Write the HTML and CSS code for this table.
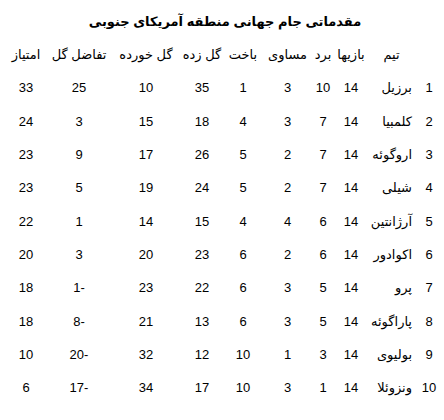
FILE: index.html
```html
<!DOCTYPE html>
<html lang="fa" dir="rtl">
<head>
<meta charset="utf-8">
<title>مقدماتی جام جهانی منطقه آمریکای جنوبی</title>
<link rel="stylesheet" href="styles.css">
</head>
<body>
<div class="page">
  <h1 class="title">مقدماتی جام جهانی منطقه آمریکای جنوبی</h1>
  <div class="table">
    <div class="row head">
      <span class="c rank"></span>
      <span class="c team-h">تیم</span>
      <span class="c">بازیها</span>
      <span class="c">برد</span>
      <span class="c">مساوی</span>
      <span class="c">باخت</span>
      <span class="c">گل زده</span>
      <span class="c">گل خورده</span>
      <span class="c">تفاضل گل</span>
      <span class="c">امتیاز</span>
    </div>
    <div class="row"><span class="c rank">1</span><span class="c team">برزیل</span><span class="c">14</span><span class="c">10</span><span class="c">3</span><span class="c">1</span><span class="c">35</span><span class="c">10</span><span class="c">25</span><span class="c">33</span></div>
    <div class="row"><span class="c rank">2</span><span class="c team">کلمبیا</span><span class="c">14</span><span class="c">7</span><span class="c">3</span><span class="c">4</span><span class="c">18</span><span class="c">15</span><span class="c">3</span><span class="c">24</span></div>
    <div class="row"><span class="c rank">3</span><span class="c team">اروگوئه</span><span class="c">14</span><span class="c">7</span><span class="c">2</span><span class="c">5</span><span class="c">26</span><span class="c">17</span><span class="c">9</span><span class="c">23</span></div>
    <div class="row"><span class="c rank">4</span><span class="c team">شیلی</span><span class="c">14</span><span class="c">7</span><span class="c">2</span><span class="c">5</span><span class="c">24</span><span class="c">19</span><span class="c">5</span><span class="c">23</span></div>
    <div class="row"><span class="c rank">5</span><span class="c team">آرژانتین</span><span class="c">14</span><span class="c">6</span><span class="c">4</span><span class="c">4</span><span class="c">15</span><span class="c">14</span><span class="c">1</span><span class="c">22</span></div>
    <div class="row"><span class="c rank">6</span><span class="c team">اکوادور</span><span class="c">14</span><span class="c">6</span><span class="c">2</span><span class="c">6</span><span class="c">23</span><span class="c">20</span><span class="c">3</span><span class="c">20</span></div>
    <div class="row"><span class="c rank">7</span><span class="c team">پرو</span><span class="c">14</span><span class="c">5</span><span class="c">3</span><span class="c">6</span><span class="c">22</span><span class="c">23</span><span class="c">-1</span><span class="c">18</span></div>
    <div class="row"><span class="c rank">8</span><span class="c team">پاراگوئه</span><span class="c">14</span><span class="c">5</span><span class="c">3</span><span class="c">6</span><span class="c">13</span><span class="c">21</span><span class="c">-8</span><span class="c">18</span></div>
    <div class="row"><span class="c rank">9</span><span class="c team">بولیوی</span><span class="c">14</span><span class="c">3</span><span class="c">1</span><span class="c">10</span><span class="c">12</span><span class="c">32</span><span class="c">-20</span><span class="c">10</span></div>
    <div class="row"><span class="c rank">10</span><span class="c team">ونزوئلا</span><span class="c">14</span><span class="c">1</span><span class="c">3</span><span class="c">10</span><span class="c">17</span><span class="c">34</span><span class="c">-17</span><span class="c">6</span></div>
  </div>
</div>
</body>
</html>
```

FILE: styles.css
```css
html, body {
  margin: 0;
  padding: 0;
  background: #ffffff;
}

body {
  font-family: "Liberation Sans", "DejaVu Sans", sans-serif;
  font-size: 13px;
  color: #000000;
}

.page {
  width: 444px;
  box-sizing: border-box;
  padding: 0 0 0 6px;
}

.title {
  margin: 0;
  padding: 10px 0 4.33px 0;
  font-size: 13px;
  line-height: 24px;
  font-weight: bold;
  text-align: center;
}

.table {
  display: grid;
  grid-auto-rows: 33.333px;
}

.row {
  display: grid;
  grid-template-columns: 30px 45px 36px 20px 51px 38px 44px 68px 66px 40px;
  align-items: center;
}

.c {
  text-align: center;
  white-space: nowrap;
  line-height: 16px;
}

.team {
  text-align: right;
  padding-right: 2px;
}

.team-h {
  text-align: center;
}
```
